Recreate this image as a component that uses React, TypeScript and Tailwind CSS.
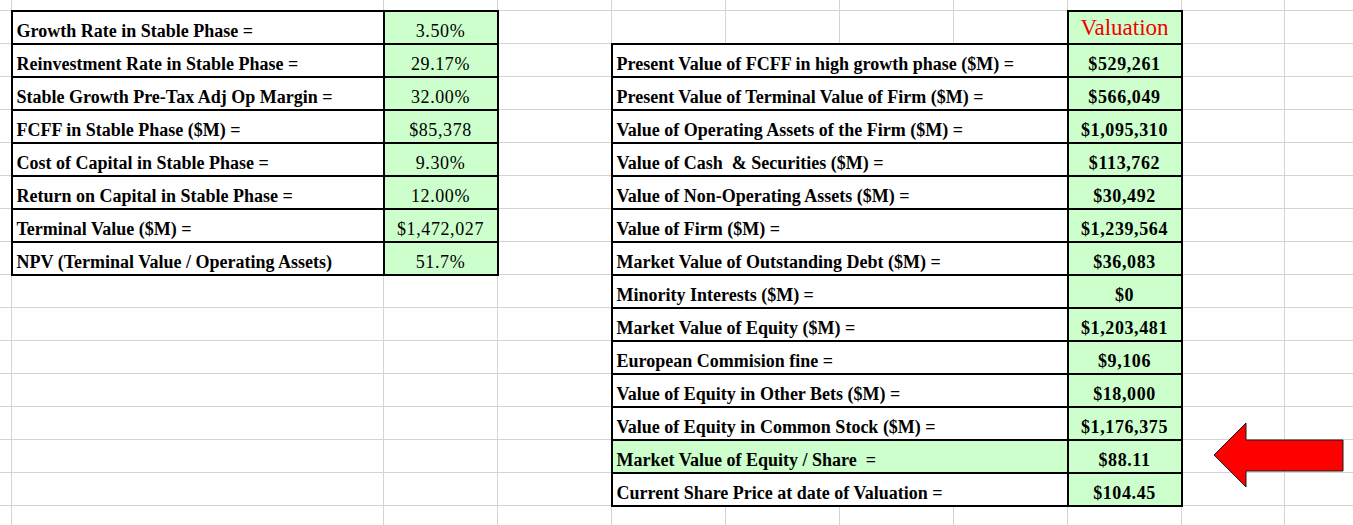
import React from 'react';

type Row = { label: string; value: string; shaded?: boolean };

const leftRows: Row[] = [
	{ label: 'Growth Rate in Stable Phase =', value: '3.50%' },
	{ label: 'Reinvestment Rate in Stable Phase =', value: '29.17%' },
	{ label: 'Stable Growth Pre-Tax Adj Op Margin =', value: '32.00%' },
	{ label: 'FCFF in Stable Phase ($M) =', value: '$85,378' },
	{ label: 'Cost of Capital in Stable Phase =', value: '9.30%' },
	{ label: 'Return on Capital in Stable Phase =', value: '12.00%' },
	{ label: 'Terminal Value ($M) =', value: '$1,472,027' },
	{ label: 'NPV (Terminal Value / Operating Assets)', value: '51.7%' },
];

const rightRows: Row[] = [
	{ label: 'Present Value of FCFF in high growth phase ($M) =', value: '$529,261' },
	{ label: 'Present Value of Terminal Value of Firm ($M) =', value: '$566,049' },
	{ label: 'Value of Operating Assets of the Firm ($M) =', value: '$1,095,310' },
	{ label: 'Value of Cash  & Securities ($M) =', value: '$113,762' },
	{ label: 'Value of Non-Operating Assets ($M) =', value: '$30,492' },
	{ label: 'Value of Firm ($M) =', value: '$1,239,564' },
	{ label: 'Market Value of Outstanding Debt ($M) =', value: '$36,083' },
	{ label: 'Minority Interests ($M) =', value: '$0' },
	{ label: 'Market Value of Equity ($M) =', value: '$1,203,481' },
	{ label: 'European Commision fine =', value: '$9,106' },
	{ label: 'Value of Equity in Other Bets ($M) =', value: '$18,000' },
	{ label: 'Value of Equity in Common Stock ($M) =', value: '$1,176,375' },
	{ label: 'Market Value of Equity / Share  =', value: '$88.11', shaded: true },
	{ label: 'Current Share Price at date of Valuation =', value: '$104.45' },
];

const grid = 'border border-[#d4d4d4] p-0';
const thick = 'border-2 border-black';
const labelCell = `${thick} align-bottom pb-[3px] pl-[4px] text-left font-bold whitespace-pre overflow-hidden`;
const valueCell = `${thick} bg-[#ccffcc] align-bottom pb-[3px] text-center whitespace-nowrap tracking-[0.6px]`;

function Empty() {
	return <td className={grid}></td>;
}

function ArrowLeft() {
	return (
		<svg className="absolute left-[1210px] top-[419px]" width="140" height="72" viewBox="0 0 140 72">
			<polygon points="4,36 36,4 36,21 133,21 133,52 36,52 36,68" fill="#ff0000" stroke="#1a1a1a" strokeWidth="1" />
		</svg>
	);
}

export default function App() {
	const bodyRows: React.ReactNode[] = [];

	for (let i = 0; i < 15; i++) {
		const left = leftRows[i];
		const right = i === 0 ? null : rightRows[i - 1];
		bodyRows.push(
			<tr key={i} className="h-[33px]">
				<Empty />
				{left ? <td className={labelCell}>{left.label}</td> : <Empty />}
				{left ? <td className={valueCell}>{left.value}</td> : <Empty />}
				<Empty />
				{right ? (
					<td colSpan={4} className={`${labelCell} ${right.shaded ? 'bg-[#ccffcc]' : 'bg-white'}`}>
						{right.label}
					</td>
				) : (
					<>
						<Empty />
						<Empty />
						<Empty />
						<Empty />
					</>
				)}
				{right ? (
					<td className={`${valueCell} font-bold`}>{right.value}</td>
				) : (
					<td className={`${thick} bg-[#ccffcc] align-bottom pb-[4px] text-center text-[23px] leading-[23px] text-[#f00000]`}>Valuation</td>
				)}
				<Empty />
				<Empty />
			</tr>
		);
	}

	const blankRow = (key: string, h: string) => (
		<tr key={key} className={h}>
			{Array.from({ length: 11 }).map((_, j) => (
				<Empty key={j} />
			))}
		</tr>
	);

	return (
		<div className="relative w-[1353px] h-[525px] overflow-hidden bg-white text-black font-['Liberation_Serif','Times_New_Roman',serif] text-[18px] leading-[18px]">
			<table className="table-fixed border-collapse w-[1360px] -mt-[1px] -ml-[1px]">
				<colgroup>
					<col className="w-[12px]" />
					<col className="w-[372px]" />
					<col className="w-[114px]" />
					<col className="w-[114px]" />
					<col className="w-[114px]" />
					<col className="w-[114px]" />
					<col className="w-[114px]" />
					<col className="w-[114px]" />
					<col className="w-[114px]" />
					<col className="w-[103px]" />
					<col className="w-[75px]" />
				</colgroup>
				<tbody>
					{blankRow('top', 'h-[11px]')}
					{bodyRows}
					{blankRow('bottom', 'h-[33px]')}
				</tbody>
			</table>
			<ArrowLeft />
		</div>
	);
}
